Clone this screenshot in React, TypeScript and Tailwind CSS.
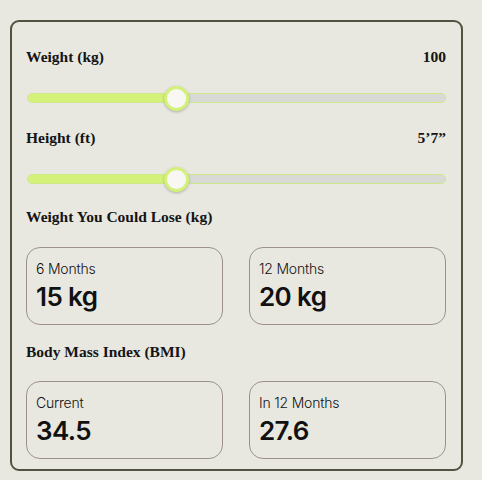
const serif = { fontFamily: '"Liberation Serif", "Times New Roman", serif' };

const Slider = ({ pct }: { pct: number }) => (
  <div className="relative h-[24px] flex items-center">
    <div className="w-full h-[10px] rounded-full bg-[#d9d9d5] border border-[#cfe98a] overflow-hidden">
      <div className="h-full bg-[#d4f27a]" style={{ width: `${pct}%` }} />
    </div>
    <div
      className="absolute top-0 w-[25px] h-[25px] -ml-[12px] rounded-full bg-[#f8f7f3] border-[3px] border-[#d4f27a] shadow-[0_1px_3px_rgba(0,0,0,0.25)]"
      style={{ left: `${pct}%` }}
    />
  </div>
);

const StatBox = ({ label, value }: { label: string; value: string }) => (
  <div className="h-[78px] rounded-[14px] border border-[#9c918a] px-[9px] pt-[11px] font-['Inter',sans-serif] text-[#111]">
    <div className="text-[14px] leading-[20px] font-light tracking-[-0.2px]">{label}</div>
    <div className="text-[26px] leading-[32px] font-semibold tracking-[-0.6px] mt-[2px]">{value}</div>
  </div>
);

export default function App() {
  return (
    <div className="w-[482px] h-[480px] bg-[#e8e8e1] pt-[20px] pl-[10px]">
      <div className="w-[453px] h-[451px] rounded-[9px] border-2 border-[#50533f] pl-[14px] pr-[15px] pt-[25px] text-[#141414]">
        <div className="flex justify-between h-[20px] text-[15.5px] leading-[20px] font-bold" style={serif}>
          <span>Weight (kg)</span>
          <span>100</span>
        </div>
        <div className="mt-[19px] ml-[1px]">
          <Slider pct={35.6} />
        </div>
        <div className="mt-[18px] flex justify-between h-[20px] text-[15.5px] leading-[20px] font-bold" style={serif}>
          <span>Height (ft)</span>
          <span>5’7”</span>
        </div>
        <div className="mt-[19px] ml-[1px]">
          <Slider pct={35.6} />
        </div>
        <div className="mt-[16px] h-[20px] text-[15.5px] leading-[20px] font-bold" style={serif}>
          Weight You Could Lose (kg)
        </div>
        <div className="mt-[20px] grid grid-cols-2 gap-[26px]">
          <StatBox label="6 Months" value="15 kg" />
          <StatBox label="12 Months" value="20 kg" />
        </div>
        <div className="mt-[17px] h-[20px] text-[15.5px] leading-[20px] font-bold" style={serif}>
          Body Mass Index (BMI)
        </div>
        <div className="mt-[19px] grid grid-cols-2 gap-[26px]">
          <StatBox label="Current" value="34.5" />
          <StatBox label="In 12 Months" value="27.6" />
        </div>
      </div>
    </div>
  );
}
